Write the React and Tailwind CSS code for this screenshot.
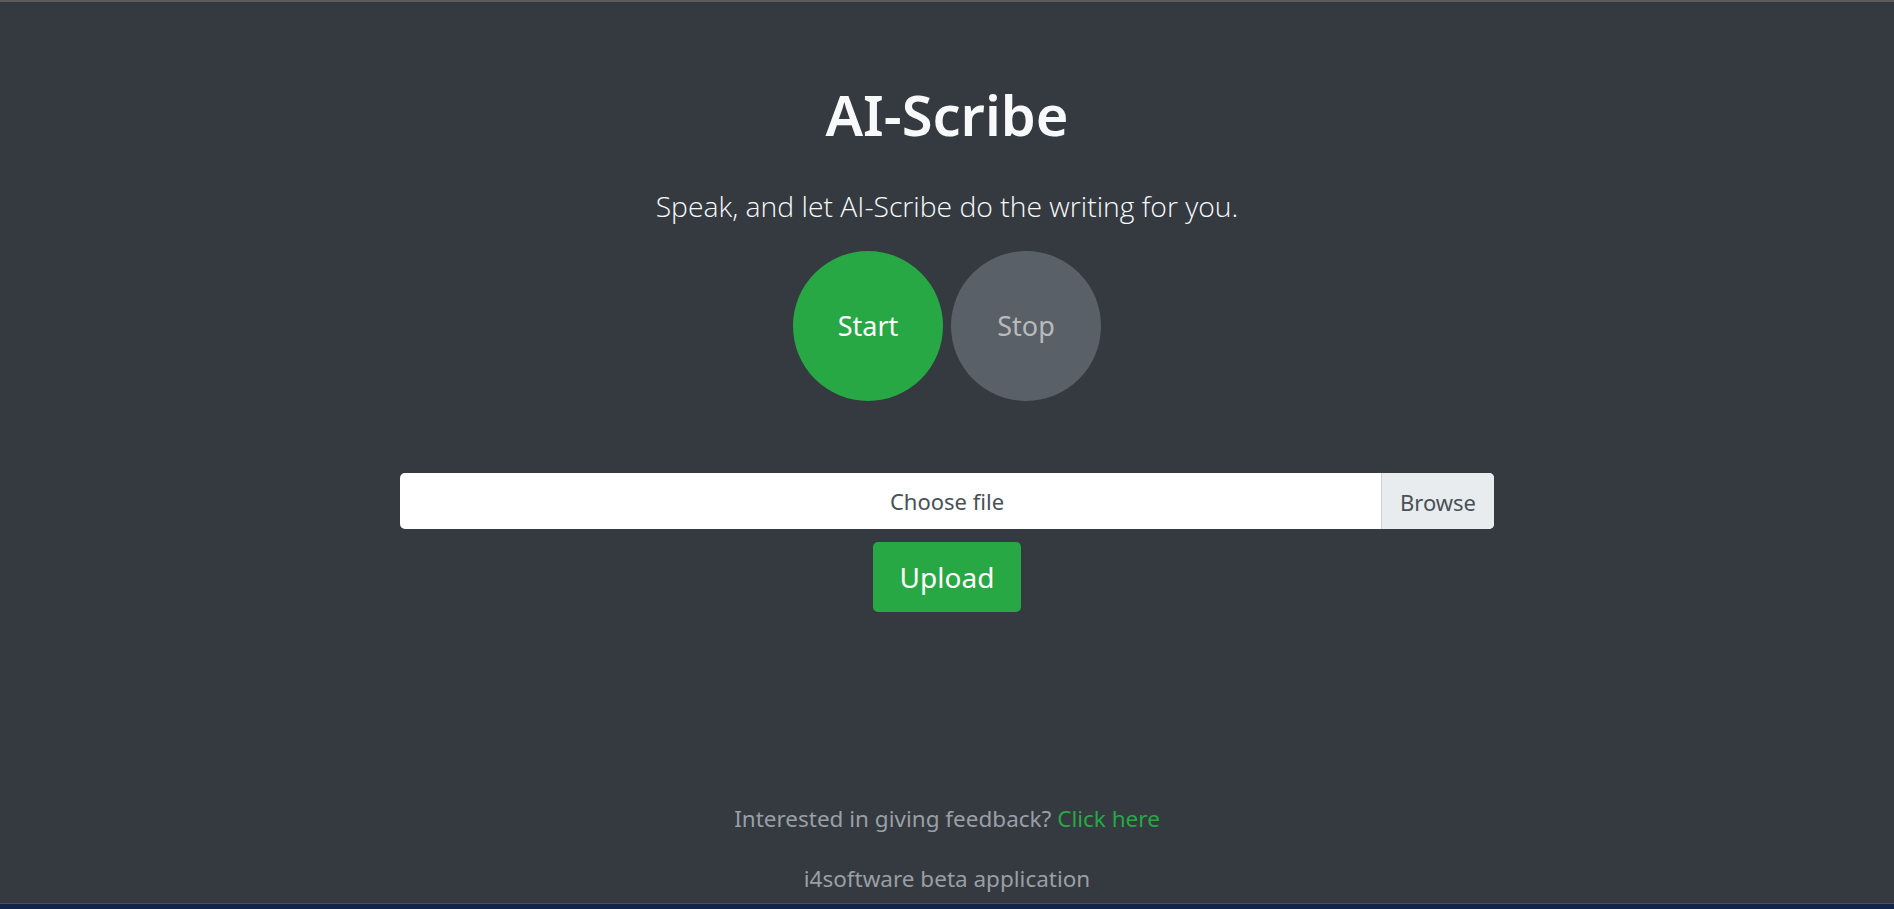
export default function App() {
  return (
    <div className="h-[909px] w-full bg-[#343a40] flex flex-col overflow-hidden font-['Noto_Sans','Open_Sans',sans-serif]">
      <div className="h-[2px] bg-[#5c5c5c] shrink-0" />

      {/* Header */}
      <div className="flex flex-col items-center pt-[76px]">
        <h1 className="text-[#f8f9fa] text-[56px] leading-[72px] font-semibold">AI-Scribe</h1>
        <p className="mt-[36px] text-[#f8f9fa] text-[28.3px] leading-[40px] font-light font-['Open_Sans','Noto_Sans',sans-serif]">
          Speak, and let AI-Scribe do the writing for you.
        </p>

        {/* Record controls */}
        <div className="mt-[25px] flex gap-[8px]">
          <button className="w-[150px] h-[150px] rounded-full bg-[#28a745] text-white text-[27px]">
            Start
          </button>
          <button className="w-[150px] h-[150px] rounded-full bg-[#5a6067] text-[#b8babc] text-[27px]">
            Stop
          </button>
        </div>

        {/* File upload */}
        <div className="mt-[72px] w-[1094px] h-[56px] flex rounded-[5px] bg-white overflow-hidden relative">
          <div className="absolute inset-0 flex items-center justify-center text-[#495057] text-[22px]">
            Choose file
          </div>
          <div className="flex-1" />
          <div className="relative w-[113px] border-l border-[#ced4da] bg-[#e9ecef] flex items-center justify-center pt-[2px] text-[#495057] text-[22px]">
            Browse
          </div>
        </div>
        <button className="mt-[13px] w-[148px] h-[70px] rounded-[5px] bg-[#28a745] text-white text-[28px]">
          Upload
        </button>
      </div>

      {/* Footer */}
      <div className="mt-auto flex flex-col items-center pb-[8px] text-[#9a9fa5] text-[22.5px] leading-[32px]">
        <p>
          Interested in giving feedback? <a className="text-[#28a745]">Click here</a>
        </p>
        <p className="mt-[28px]">i4software beta application</p>
      </div>
      <div className="h-[1px] bg-[#4a5160] shrink-0" />
      <div className="h-[5px] bg-[#13234a] shrink-0" />
    </div>
  )
}
